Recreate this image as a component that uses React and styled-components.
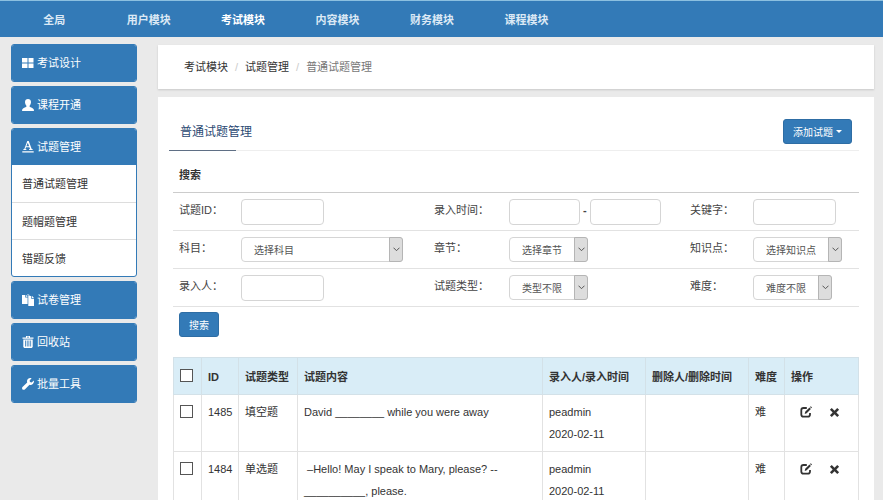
import React from "react";
import styled, { createGlobalStyle } from "styled-components";

const GlobalStyle = createGlobalStyle`
  * {
    box-sizing: border-box;
  }
  body {
    margin: 0;
    background: #eaeaea;
    color: #333;
    font-family: "Liberation Sans", "Noto Sans CJK SC", sans-serif;
    font-size: 11px;
    line-height: 22px;
  }
  a {
    color: inherit;
    text-decoration: none;
  }
  button, input, select {
    font-family: inherit;
  }
`;

const modules = ["全局", "用户模块", "考试模块", "内容模块", "财务模块", "课程模块"];

const menu = [
  { icon: "grid", label: "考试设计" },
  { icon: "user", label: "课程开通" },
  { icon: "font", label: "试题管理", children: ["普通试题管理", "题帽题管理", "错题反馈"] },
  { icon: "copy", label: "试卷管理" },
  { icon: "trash", label: "回收站" },
  { icon: "wrench", label: "批量工具" },
];

const questions = [
  {
    id: 1485,
    type: "填空题",
    content: ["David ________ while you were away"],
    author: "peadmin",
    date: "2020-02-11",
    level: "难",
  },
  {
    id: 1484,
    type: "单选题",
    content: ["\u00a0–Hello! May I speak to Mary, please? --", "__________, please."],
    author: "peadmin",
    date: "2020-02-11",
    level: "难",
  },
];

const shapes = {
  grid: <path d="M0 1h5.500v4.500H0zM6.500 1H11.500v4.500H6.500zM0 6.500h5.500V11H0zM6.500 6.500H11.500V11H6.500z" />,
  user: (
    <path d="M6 0C4.200 0 3 1.300 3 3.100c0 1.500.6 2.800 1.400 3.600v1C3.400 8.500.9 9 .3 10.300L0 12h12l-.3-1.700C11.100 9 8.600 8.500 7.600 7.700v-1c.8-.8 1.400-2.100 1.400-3.600C9 1.300 7.800 0 6 0z" />
  ),
  font: (
    <path d="M5.300 0h1.400L9.700 8l1 .3V9H7v-.7l1-.3-.6-1.800H4L3.400 8l1 .3V9H1.300v-.7l1-.3zM5.800 1.800L4.400 5.300h2.700zM.3 10.300h11.400v1.200H.3z" />
  ),
  copy: (
    <path d="M0 1h3.200v2.500H5.600V10H0zM3.900.8L5.800 2.800H3.900zM6.300 2h2.900v2.800h2.800V12H6.300zM9.900 1.800L12 4.100H9.900zM5 .5h1.500L8.500 1.500H5.800z" />
  ),
  trash: (
    <path
      fillRule="evenodd"
      d="M4 0h4v1.500h3.500v1.300H.5V1.500H4zM5 .8v.7h2V.8zM1.300 3.500h9.400V11l-1 1H2.300l-1-1zM3 4.500v6h.8v-6zM4.800 4.500v6h.8v-6zM6.500 4.500v6h.8v-6zM8.300 4.500v6h.8v-6z"
    />
  ),
  wrench: (
    <path d="M11.800 2.500L9.700 4.500 8 4.100 7.600 2.400 9.600.3C8.300-.2 6.800.1 5.900 1.100c-.9.900-1.100 2.200-.7 3.300L.5 9.100c-.6.600-.6 1.600 0 2.300.6.600 1.600.6 2.300 0l4.700-4.700c1.100.4 2.400.2 3.300-.7 1-1 1.400-2.300 1-3.500z" />
  ),
  edit: (
    <>
      <path d="M6.800 2H3.500C2.200 2 1.300 2.900 1.300 4.200v4.300c0 1.300.9 2.200 2.200 2.200h4.300c1.300 0 2.200-.9 2.200-2.200V7" fill="none" stroke="currentColor" strokeWidth="1.800" />
      <path d="M4.700 8l.5-2.200L9.500 1.500l1.400 1.400-4.200 4.300zM10 1l.8-.8 1.300 1.300-.8.8z" />
    </>
  ),
  remove: (
    <path d="M1 3l2-2 3 3 3-3 2 2-3 3 3 3-2 2-3-3-3 3-2-2 3-3z" />
  ),
};

const Icon = ({ name, size = 12 }) => (
  <svg width={size} height={size} viewBox="0 0 12 12" fill="currentColor" aria-hidden="true">
    {shapes[name]}
  </svg>
);

const SelectBox = ({ label, text, width }) => (
  <SelectWrap $width={width}>
    <select aria-label={label}>
      <option>{text}</option>
    </select>
    <Arrow>
      <svg width="7" height="5" viewBox="0 0 7 5" fill="none" stroke="#555" aria-hidden="true">
        <path d="M.5 .7l3 3 3-3" />
      </svg>
    </Arrow>
  </SelectWrap>
);

const App = () => {
  return (
    <>
      <GlobalStyle />
      <TopNav>
        {modules.map((item) => (
          <NavItem key={item} href="#" $active={item === "考试模块"}>
            {item}
          </NavItem>
        ))}
      </TopNav>

      <Layout>
        <Sidebar>
          {menu.map((item) => (
            <MenuPanel key={item.label}>
              <MenuLink href="#">
                <Icon name={item.icon} />
                {item.label}
              </MenuLink>
              {item.children && (
                <SubMenu>
                  {item.children.map((child) => (
                    <li key={child}>
                      <a href="#">{child}</a>
                    </li>
                  ))}
                </SubMenu>
              )}
            </MenuPanel>
          ))}
        </Sidebar>

        <Main>
          <Breadcrumb>
            <li><a href="#">考试模块</a></li>
            <li><a href="#">试题管理</a></li>
            <li>普通试题管理</li>
          </Breadcrumb>

          <Panel>
            <TitleBar>
              <Title>普通试题管理</Title>
              <Button type="button">
                添加试题
                <Caret />
              </Button>
            </TitleBar>

            <Content>
              {/* search form */}
              <form onSubmit={(e) => e.preventDefault()}>
                <SearchHeading>搜索</SearchHeading>
                <FormRow>
                  <label htmlFor="qid">试题ID：</label>
                  <div><TextInput id="qid" $width={83} /></div>
                  <label htmlFor="stime">录入时间：</label>
                  <DateRange>
                    <TextInput id="stime" $width={71} />
                    <span>-</span>
                    <TextInput aria-label="结束时间" $width={71} />
                  </DateRange>
                  <label htmlFor="keyword">关键字：</label>
                  <div><TextInput id="keyword" $width={83} /></div>
                </FormRow>
                <FormRow>
                  <span>科目：</span>
                  <SelectBox label="科目" text="选择科目" width={162} />
                  <span>章节：</span>
                  <SelectBox label="章节" text="选择章节" width={79} />
                  <span>知识点：</span>
                  <SelectBox label="知识点" text="选择知识点" width={89} />
                </FormRow>
                <FormRow>
                  <label htmlFor="username">录入人：</label>
                  <div><TextInput id="username" $width={83} /></div>
                  <span>试题类型：</span>
                  <SelectBox label="试题类型" text="类型不限" width={79} />
                  <span>难度：</span>
                  <SelectBox label="难度" text="难度不限" width={79} />
                </FormRow>
                <Actions>
                  <Button type="submit">搜索</Button>
                </Actions>
              </form>

              <Table>
                <colgroup>
                  <Col $width={28} />
                  <Col $width={37} />
                  <Col $width={59} />
                  <col />
                  <Col $width={103} />
                  <Col $width={103} />
                  <Col $width={36} />
                  <Col $width={74} />
                </colgroup>
                <thead>
                  <tr>
                    <th><Checkbox aria-label="全选" /></th>
                    <th>ID</th>
                    <th>试题类型</th>
                    <th>试题内容</th>
                    <th>录入人/录入时间</th>
                    <th>删除人/删除时间</th>
                    <th>难度</th>
                    <th>操作</th>
                  </tr>
                </thead>
                <tbody>
                  {questions.map((q) => (
                    <tr key={q.id}>
                      <td><Checkbox aria-label={`${q.id}`} /></td>
                      <td>{q.id}</td>
                      <td>{q.type}</td>
                      <td>
                        {q.content.map((line) => (
                          <div key={line}>{line}</div>
                        ))}
                      </td>
                      <td>
                        {q.author}
                        <br />
                        {q.date}
                      </td>
                      <td />
                      <td>{q.level}</td>
                      <td>
                        <RowActions>
                          <a href="#" aria-label="编辑"><Icon name="edit" /></a>
                          <a href="#" aria-label="删除"><Icon name="remove" size={11} /></a>
                        </RowActions>
                      </td>
                    </tr>
                  ))}
                </tbody>
              </Table>
            </Content>
          </Panel>
        </Main>
      </Layout>
    </>
  );
};

const TopNav = styled.nav`
  display: grid;
  grid-template-columns: repeat(9, 1fr);
  padding: 0 26px 0 7px;
  height: 37px;
  background: #337ab7;
  border-top: 1px solid #8cc0e0;
`;

const NavItem = styled.a`
  color: ${({ $active }) => ($active ? "#fff" : "#dce9f5")};
  font-weight: bold;
  line-height: 39px;
  text-align: center;
`;

const Layout = styled.div`
  display: grid;
  grid-template-columns: 126px minmax(0, 1fr);
  gap: 21px;
  padding: 7px 9px 0 11px;
`;

const Sidebar = styled.aside`
  display: flex;
  flex-direction: column;
  gap: 4px;
`;

const MenuPanel = styled.div`
  border: 1px solid #337ab7;
  border-radius: 3px;
  background: #fff;
  overflow: hidden;
`;

const MenuLink = styled.a`
  display: flex;
  align-items: center;
  gap: 3px;
  height: 36px;
  padding-left: 10px;
  background: #337ab7;
  color: #fff;
`;

const SubMenu = styled.ul`
  margin: 0;
  padding: 0;
  list-style: none;

  li {
    height: 37px;
    padding-left: 10px;
    line-height: 38px;
  }
  li + li {
    border-top: 1px solid #ddd;
  }
`;

const Main = styled.main`
  display: flex;
  flex-direction: column;
  gap: 8px;
  padding-top: 1px;
`;

const Breadcrumb = styled.ol`
  display: flex;
  margin: 0;
  padding: 11px 26px;
  list-style: none;
  background: #fff;
  box-shadow: 0 1px 2px rgba(0, 0, 0, 0.15);

  li + li::before {
    content: "/";
    padding: 0 7px;
    color: #ccc;
  }
  li:last-child {
    color: #777;
  }
`;

const Panel = styled.section`
  padding: 22px 15px 0 11px;
  background: #fff;
`;

const TitleBar = styled.div`
  display: flex;
  justify-content: space-between;
  height: 32px;
  padding-right: 7px;
  border-bottom: 1px solid #eee;
`;

const Title = styled.h1`
  width: 67px;
  height: 32px;
  margin: 0;
  padding-left: 11px;
  border-bottom: 1px solid #5f6f85;
  color: #2c4a73;
  font-size: 12px;
  font-weight: normal;
  line-height: 26px;
  white-space: nowrap;
`;

const Button = styled.button`
  display: inline-flex;
  align-items: center;
  gap: 3px;
  height: 25px;
  padding: 0 9px;
  border: 1px solid #2e6da4;
  border-radius: 3px;
  background: #337ab7;
  color: #fff;
  font-size: 10px;
`;

const Caret = styled.span`
  border: 3px solid transparent;
  border-top-color: #fff;
  border-bottom: 0;
`;

const Content = styled.div`
  padding: 13px 0 0 4px;
`;

const SearchHeading = styled.div`
  height: 29px;
  padding-left: 6px;
  border-bottom: 1px solid #ccc;
  font-weight: bold;
`;

const FormRow = styled.div`
  display: grid;
  grid-template-columns: 62px 193fr 75px 181fr 63px 106fr;
  height: 38px;
  padding: 6px 0 0 6px;
  border-bottom: 1px solid #e2e2e2;
  color: #444;
`;

const TextInput = styled.input`
  display: block;
  width: ${({ $width }) => $width}px;
  height: 26px;
  padding: 0 9px;
  border: 1px solid #d5d5d5;
  border-radius: 4px;
  background: #fff;
  font-size: 10px;
`;

const DateRange = styled.div`
  display: flex;
  gap: 3px;
  font-weight: bold;
`;

const SelectWrap = styled.div`
  display: grid;
  grid-template-columns: 1fr 14px;
  width: ${({ $width }) => $width}px;
  height: 25px;

  select {
    grid-area: 1 / 1 / 2 / 3;
    appearance: none;
    padding: 2px 0 0 12px;
    border: 1px solid #d5d5d5;
    border-radius: 4px;
    background: #fff;
    color: #555;
    font-size: 10px;
  }
`;

const Arrow = styled.span`
  grid-area: 1 / 2;
  display: flex;
  align-items: center;
  justify-content: center;
  border: 1px solid #b5b5b5;
  border-radius: 0 3px 3px 0;
  background: #ddd;
  pointer-events: none;
  z-index: 1;
`;

const Actions = styled.div`
  display: flex;
  padding: 5px 6px 20px;
`;

const Table = styled.table`
  width: 100%;
  table-layout: fixed;
  border-collapse: collapse;

  th, td {
    height: 57px;
    padding: 6px 0 6px 6px;
    border: 1px solid #e2e2e2;
    text-align: left;
    vertical-align: top;
    white-space: nowrap;
  }
  th {
    height: 37px;
    padding: 7px 0 5px 6px;
    border-color: #d3e1e8;
    background: #d9edf7;
    line-height: 24px;
  }
`;

const Col = styled.col`
  width: ${({ $width }) => $width}px;
`;

const Checkbox = styled.input.attrs({ type: "checkbox" })`
  display: block;
  appearance: none;
  width: 13px;
  height: 13px;
  margin: 4px 0 0;
  border: 1px solid #555;
  background: #fff;
`;

const RowActions = styled.div`
  display: flex;
  align-items: center;
  gap: 17px;
  height: 22px;
  padding-left: 9px;

  a {
    display: flex;
  }
`;

export default App;
